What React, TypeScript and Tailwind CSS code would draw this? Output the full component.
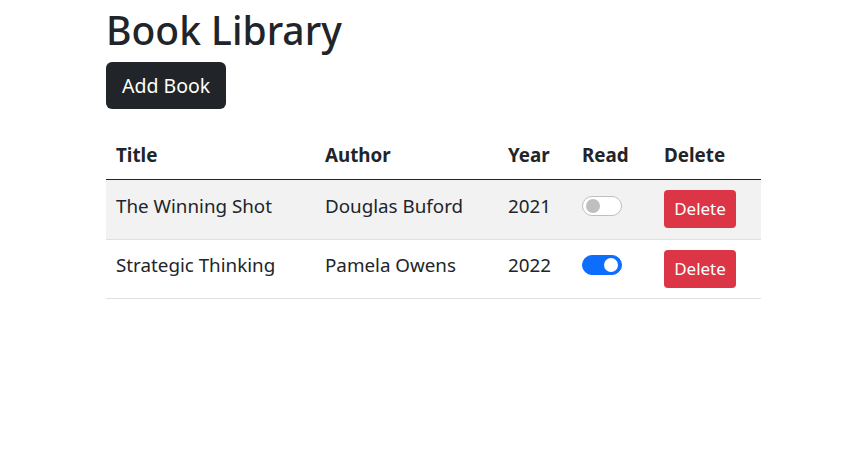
import React, { useState } from "react";

type Book = { title: string; author: string; year: number; read: boolean };

function Toggle({ on, onClick }: { on: boolean; onClick: () => void }) {
  return (
    <button
      onClick={onClick}
      className={
        on
          ? "relative flex h-[20px] w-[40px] items-center rounded-full border border-[#0d6efd] bg-[#0d6efd]"
          : "relative flex h-[20px] w-[40px] items-center rounded-full border border-[#bfbfbf] bg-white"
      }
    >
      <span
        className={
          on
            ? "absolute right-[3px] h-[14px] w-[14px] rounded-full bg-white"
            : "absolute left-[3px] h-[14px] w-[14px] rounded-full bg-[#bfbfbf]"
        }
      />
    </button>
  );
}

export default function App() {
  const [books, setBooks] = useState<Book[]>([
    { title: "The Winning Shot", author: "Douglas Buford", year: 2021, read: false },
    { title: "Strategic Thinking", author: "Pamela Owens", year: 2022, read: true },
  ]);

  return (
    <div
      className="min-h-[461px] bg-white text-[#212529]"
      style={{ fontFamily: '"Noto Sans", "Open Sans", sans-serif' }}
    >
      <div className="ml-[106px] w-[655px] pt-[4px]">
        <h1 className="text-[39px] font-medium leading-[52px]">Book Library</h1>
        <button className="mt-[6px] h-[47px] rounded-[6px] bg-[#212529] px-[16px] text-[19.5px] text-white">
          Add Book
        </button>
        <table className="mt-[21px] w-full border-collapse text-left text-[18.8px]">
          <thead>
            <tr className="h-[49px] border-b border-[#212529]">
              <th className="w-[209px] pl-[10px] pt-[2px] font-bold">Title</th>
              <th className="w-[183px] pl-[10px] pt-[2px] font-bold">Author</th>
              <th className="w-[74px] pl-[10px] pt-[2px] font-bold">Year</th>
              <th className="w-[82px] pl-[10px] pt-[2px] font-bold">Read</th>
              <th className="pl-[10px] pt-[2px] font-bold">Delete</th>
            </tr>
          </thead>
          <tbody>
            {books.map((b, i) => (
              <tr
                key={b.title}
                className={
                  i % 2 === 0
                    ? "h-[60px] border-b border-[#dee2e6] bg-[#f2f2f2]"
                    : "h-[59px] border-b border-[#dee2e6] bg-white"
                }
              >
                <td className="pb-[6px] pl-[10px]">{b.title}</td>
                <td className="pb-[6px] pl-[10px]">{b.author}</td>
                <td className="pb-[6px] pl-[10px]">{b.year}</td>
                <td className="pb-[7px] pl-[10px]">
                  <Toggle
                    on={b.read}
                    onClick={() =>
                      setBooks((bs) => bs.map((x, j) => (j === i ? { ...x, read: !x.read } : x)))
                    }
                  />
                </td>
                <td className="pl-[10px]">
                  <button
                    onClick={() => setBooks((bs) => bs.filter((_, j) => j !== i))}
                    className="h-[38px] w-[72px] rounded-[4px] bg-[#dc3545] text-[17px] text-white"
                  >
                    Delete
                  </button>
                </td>
              </tr>
            ))}
          </tbody>
        </table>
      </div>
    </div>
  );
}
